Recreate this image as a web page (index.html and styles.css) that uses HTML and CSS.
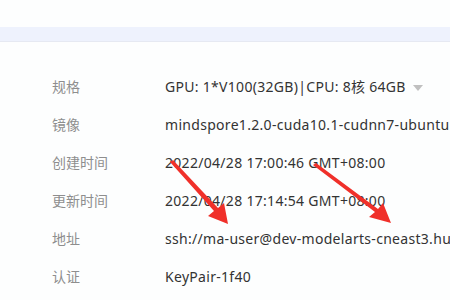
FILE: index.html
```html
<!DOCTYPE html>
<html lang="zh-CN">
<head>
  <meta charset="UTF-8" />
  <title>Notebook 详情</title>
  <link rel="stylesheet" href="styles.css">
</head>
<body>
  <div class="band"></div>

  <div class="details">
    <div class="label">规格</div>
    <div class="value">GPU: 1*V100(32GB)|CPU: 8核 64GB <span class="caret"></span></div>

    <div class="label">镜像</div>
    <div class="value">mindspore1.2.0-cuda10.1-cudnn7-ubuntu18.04</div>

    <div class="label">创建时间</div>
    <div class="value">2022/04/28 17:00:46 GMT+08:00</div>

    <div class="label">更新时间</div>
    <div class="value">2022/04/28 17:14:54 GMT+08:00</div>

    <div class="label">地址</div>
    <div class="value">ssh://ma-user@dev-modelarts-cneast3.huaweicloud.com</div>

    <div class="label">认证</div>
    <div class="value">KeyPair-1f40</div>
  </div>

  <svg class="arrows" width="450" height="300" viewBox="0 0 450 300">
    <polygon points="170,162 173,160 218,208 224,203 228,224 208,216 214,211" fill="#f0302a" />
    <polygon points="313,165 316,163 378,209 383,203 391,223 369,217 375,212" fill="#f0302a" />
  </svg>
</body>
</html>
```

FILE: styles.css
```css
body {
  margin: 0;
  width: 450px;
  height: 300px;
  overflow: hidden;
  background: #fdfefe;
  font-family: "Noto Sans", "Noto Sans CJK SC", sans-serif;
  font-size: 14px;
  position: relative;
}
.band {
  margin-top: 27px;
  height: 14px;
  background: #eef2fd;
  border-bottom: 1px solid #e6e9f2;
}
.details {
  display: grid;
  grid-template-columns: 113px 1fr;
  grid-auto-rows: 38px;
  padding: 25px 0 0 52px;
  align-items: center;
  white-space: nowrap;
}
.label {
  color: #8e8e8e;
}
.value {
  color: #333;
  letter-spacing: 0.3px;
  overflow: hidden;
}
.caret {
  display: inline-block;
  width: 0;
  height: 0;
  margin-left: 3px;
  vertical-align: middle;
  border-left: 5px solid transparent;
  border-right: 5px solid transparent;
  border-top: 6px solid #c0c0c0;
}
.arrows {
  position: absolute;
  left: 0;
  top: 0;
}
```
